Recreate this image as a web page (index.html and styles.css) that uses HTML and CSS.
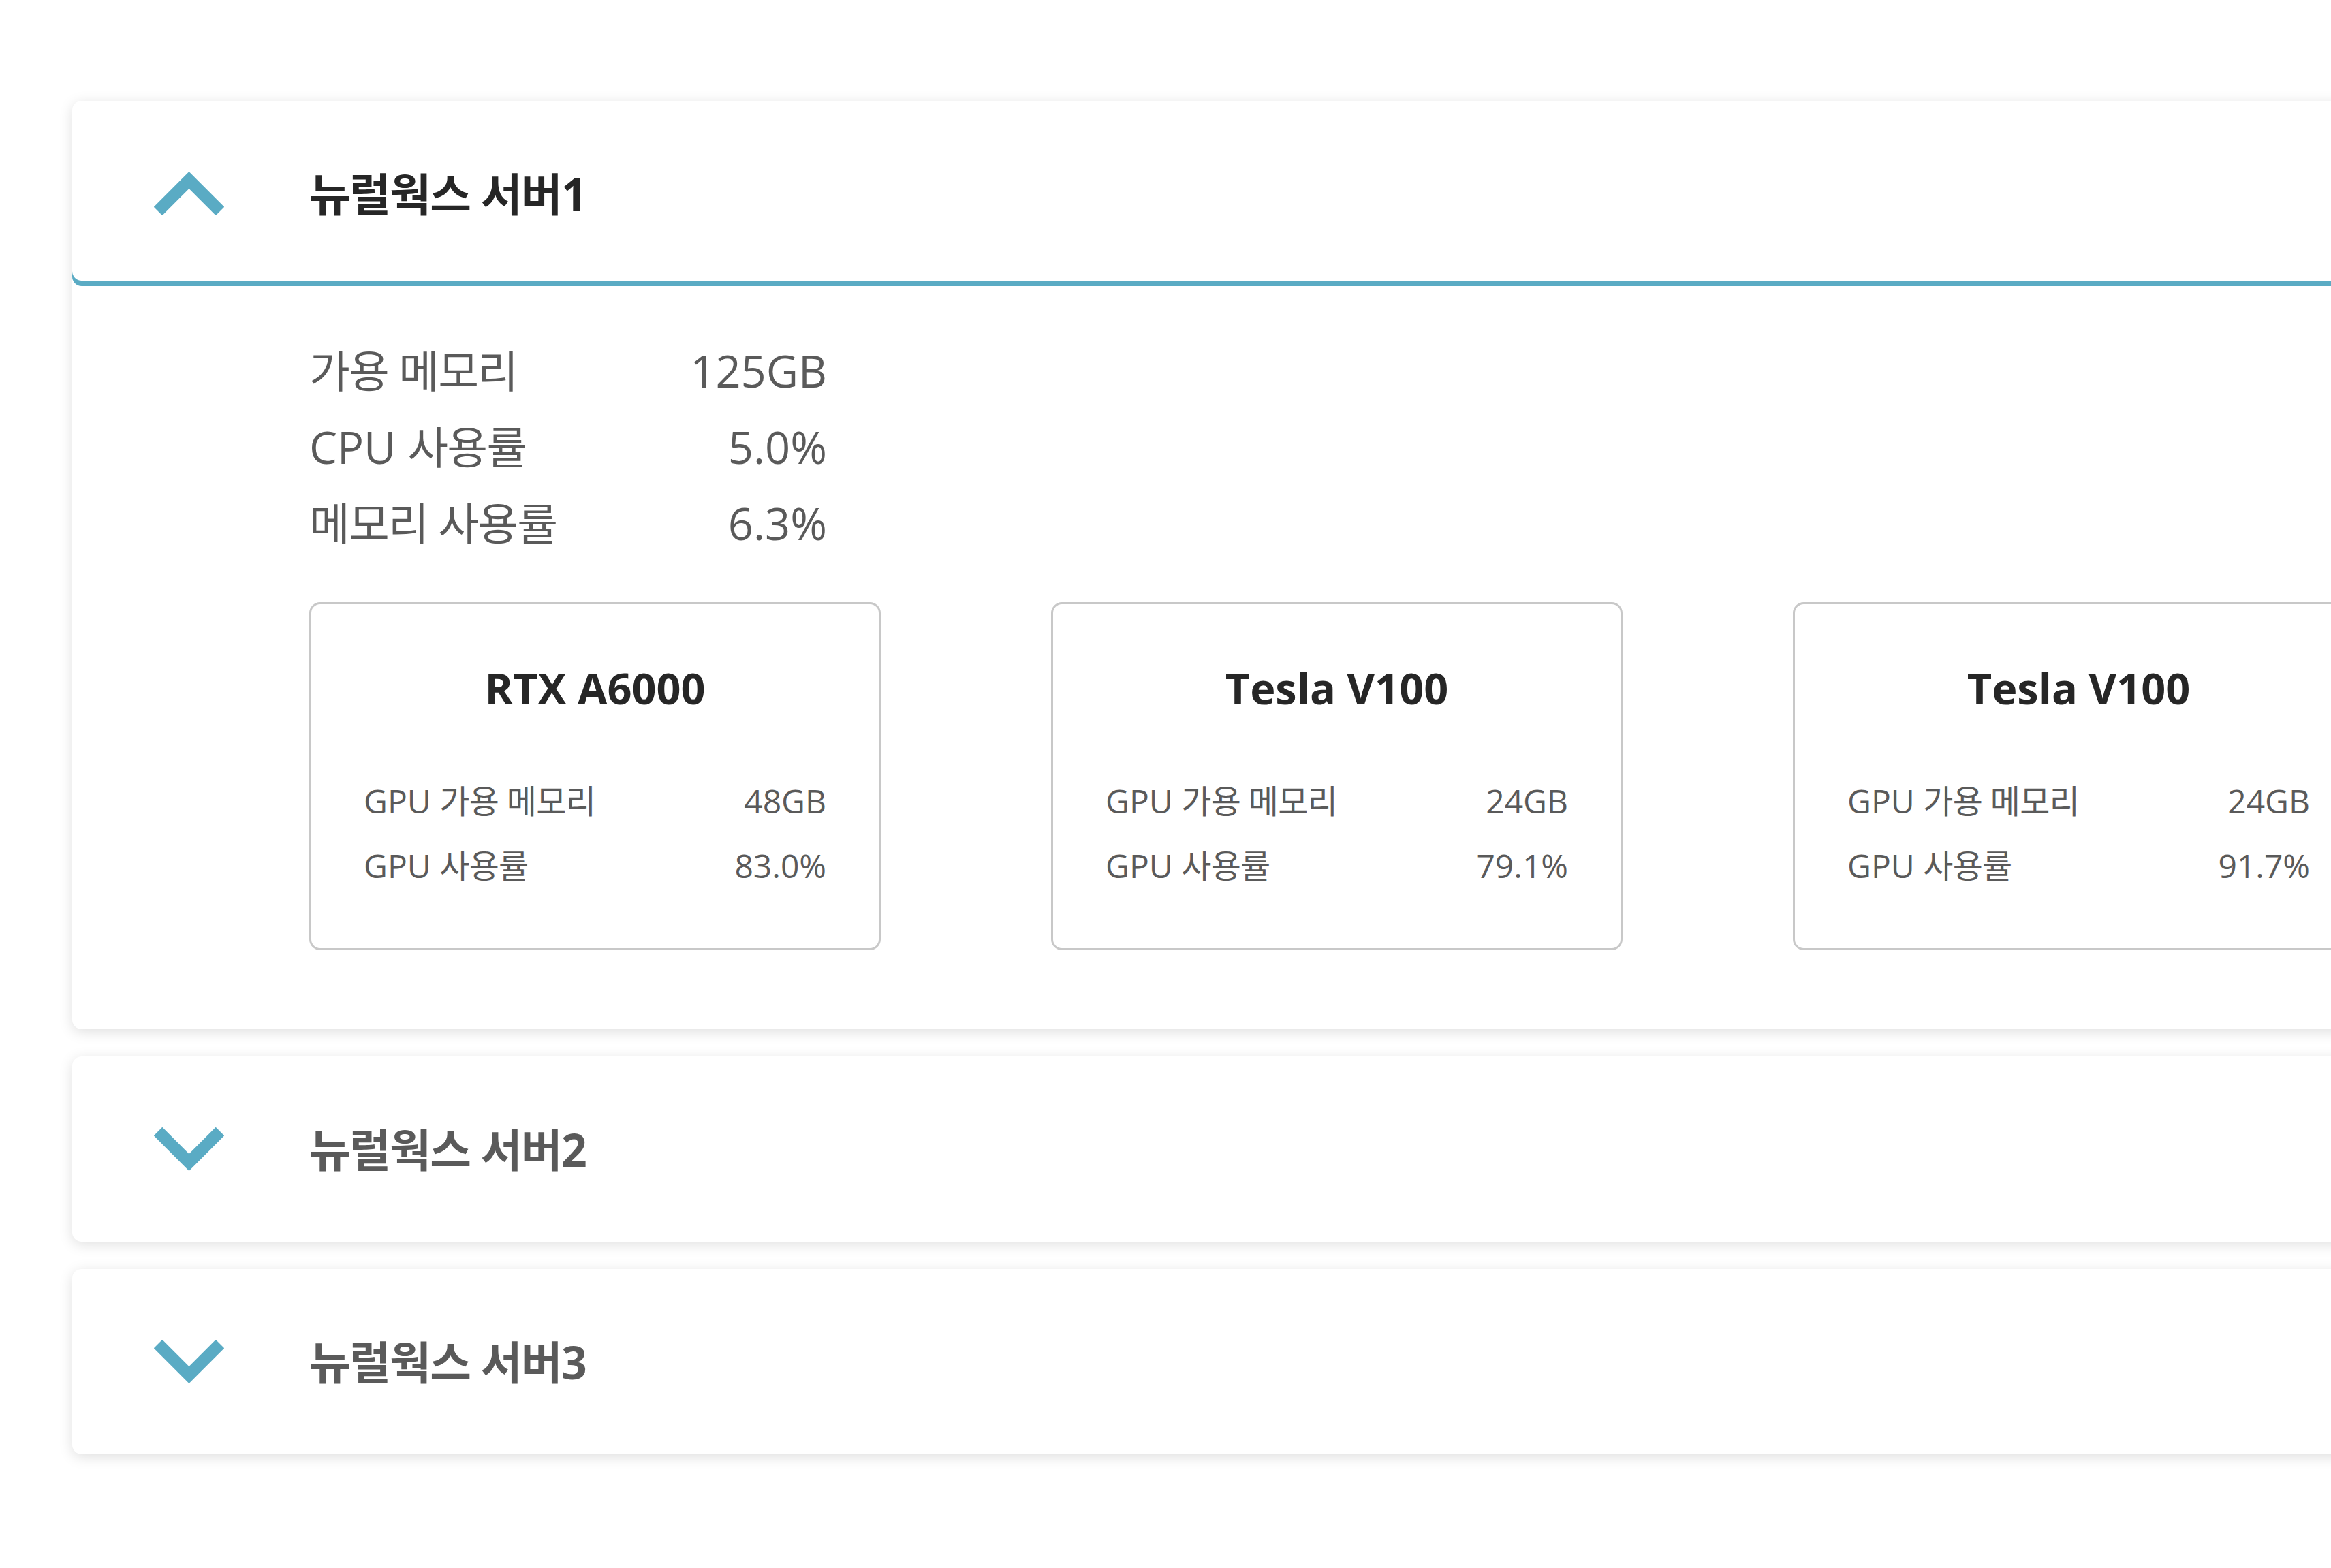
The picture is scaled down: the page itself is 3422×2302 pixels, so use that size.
FILE: index.html
```html
<!DOCTYPE html>
<html lang="ko">
<head>
<meta charset="utf-8">
<title>서버 상태</title>
<link rel="stylesheet" href="styles.css">
</head>
<body>
<main class="servers">
  <section class="server is-open">
    <header class="server-head">
      <svg class="chev" viewBox="0 0 103 64" aria-hidden="true"><polyline points="6,58 51.5,12.5 97,58"/></svg>
      <h2 class="server-name"><span class="ko">뉴럴웍스 서버</span>1</h2>
    </header>
    <div class="server-body">
      <dl class="stats">
        <dt><span class="ko">가용 메모리</span></dt><dd>125GB</dd>
        <dt>CPU <span class="ko">사용률</span></dt><dd>5.0%</dd>
        <dt><span class="ko">메모리 사용률</span></dt><dd>6.3%</dd>
      </dl>
      <div class="gpus">
        <article class="gpu">
          <h3 class="gpu-name">RTX A6000</h3>
          <dl class="gpu-stats">
            <dt>GPU <span class="ko">가용 메모리</span></dt><dd>48GB</dd>
            <dt>GPU <span class="ko">사용률</span></dt><dd>83.0%</dd>
          </dl>
        </article>
        <article class="gpu">
          <h3 class="gpu-name">Tesla V100</h3>
          <dl class="gpu-stats">
            <dt>GPU <span class="ko">가용 메모리</span></dt><dd>24GB</dd>
            <dt>GPU <span class="ko">사용률</span></dt><dd>79.1%</dd>
          </dl>
        </article>
        <article class="gpu">
          <h3 class="gpu-name">Tesla V100</h3>
          <dl class="gpu-stats">
            <dt>GPU <span class="ko">가용 메모리</span></dt><dd>24GB</dd>
            <dt>GPU <span class="ko">사용률</span></dt><dd>91.7%</dd>
          </dl>
        </article>
      </div>
    </div>
  </section>
  <section class="server">
    <header class="server-head">
      <svg class="chev" viewBox="0 0 103 64" aria-hidden="true"><polyline points="6,6 51.5,51.5 97,6"/></svg>
      <h2 class="server-name"><span class="ko">뉴럴웍스 서버</span>2</h2>
    </header>
  </section>
  <section class="server">
    <header class="server-head">
      <svg class="chev" viewBox="0 0 103 64" aria-hidden="true"><polyline points="6,6 51.5,51.5 97,6"/></svg>
      <h2 class="server-name"><span class="ko">뉴럴웍스 서버</span>3</h2>
    </header>
  </section>
</main>
</body>
</html>
```

FILE: styles.css
```css
html {
  overflow: hidden;
}

html, body {
  margin: 0;
  padding: 0;
  background: #ffffff;
}

body {
  font-family: "Open Sans", "Noto Sans CJK KR", sans-serif;
  color: #5a5a5a;
}

.ko {
  letter-spacing: -0.027em;
}

.servers {
  display: flex;
  flex-direction: column;
  gap: 40px;
  padding: 148px 0 120px 106px;
  width: 3500px;
}

.server {
  background: #ffffff;
  border-radius: 14px;
  box-shadow: 0 4px 20px rgba(0, 0, 0, 0.13);
}

.server-head {
  display: flex;
  align-items: center;
  height: 272px;
  box-sizing: border-box;
  border-radius: 14px;
}

.is-open .server-head {
  box-shadow: inset 0 -8px 0 #5aabc4;
}

.chev {
  width: 103px;
  height: 64px;
  margin-left: 120px;
  flex: none;
}

.chev polyline {
  fill: none;
  stroke: #5aabc4;
  stroke-width: 17.7;
  stroke-linecap: butt;
  stroke-linejoin: miter;
}

.server-name {
  margin: 0 0 0 125px;
  font-size: 66px;
  font-weight: 700;
  line-height: 90px;
  color: #5a5a5a;
}

.server-name .ko {
  letter-spacing: -0.025em;
}

.is-open .server-name {
  color: #262626;
}

.server-body {
  padding: 68px 0 116px 348px;
}

.stats {
  display: grid;
  grid-template-columns: auto auto;
  justify-content: space-between;
  width: 760px;
  margin: 0;
  font-size: 65px;
  line-height: 112px;
}

.stats dt,
.stats dd {
  margin: 0;
}

.stats dd {
  text-align: right;
}

.gpus {
  display: flex;
  gap: 250px;
  margin-top: 60px;
}

.gpu {
  flex: none;
  width: 839px;
  box-sizing: border-box;
  border: 3px solid #c8c8c8;
  border-radius: 16px;
  padding: 78px 77px 74px;
}

.gpu-name {
  margin: 0;
  text-align: center;
  font-size: 63px;
  font-weight: 700;
  line-height: 90px;
  color: #262626;
}

.gpu-stats {
  display: grid;
  grid-template-columns: auto auto;
  justify-content: space-between;
  margin: 73px 0 0;
  font-size: 48px;
  line-height: 95px;
}

.gpu-stats .ko {
  letter-spacing: -0.015em;
}

.gpu-stats dt,
.gpu-stats dd {
  margin: 0;
}

.gpu-stats dd {
  text-align: right;
}
```
